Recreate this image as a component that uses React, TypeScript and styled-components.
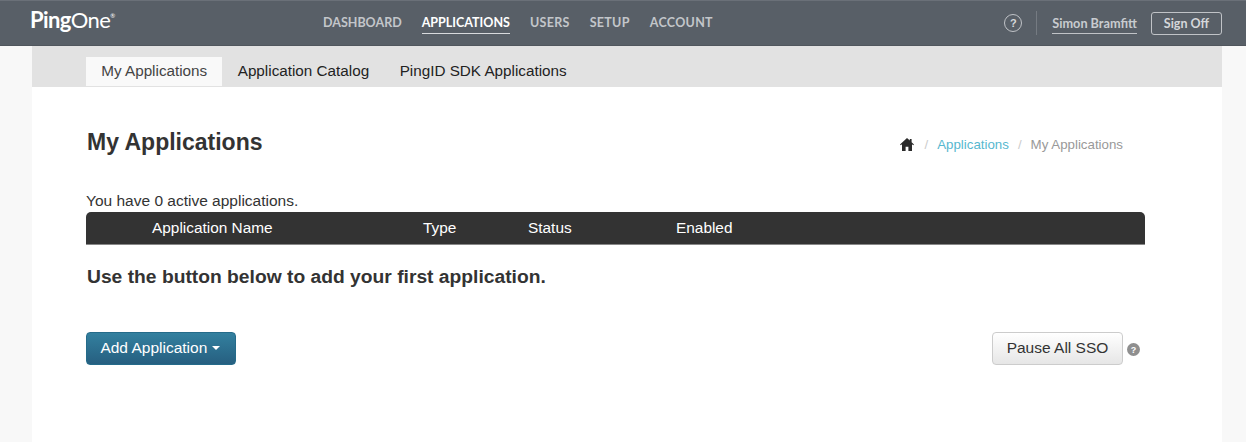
import { createGlobalStyle } from "styled-components";
import styled from "styled-components";

const GlobalStyle = createGlobalStyle`
  html, body {
    margin: 0;
    padding: 0;
    background: #f8f8f8;
    font-family: "Liberation Sans", Arial, sans-serif;
    color: #333;
  }
`;

const navItems = ["DASHBOARD", "APPLICATIONS", "USERS", "SETUP", "ACCOUNT"];
const tabs = ["My Applications", "Application Catalog", "PingID SDK Applications"];

export default function App() {
  return (
    <Page>
      <GlobalStyle />
      <Header>
        <Logo>
          <strong>Ping</strong>One<sup>®</sup>
        </Logo>
        <Nav>
          {navItems.map(item => (
            <NavLink key={item} $active={item === "APPLICATIONS"}>
              {item}
            </NavLink>
          ))}
        </Nav>
        <HeaderRight>
          <HelpCircle>?</HelpCircle>
          <Divider />
          <UserName>Simon Bramfitt</UserName>
          <SignOff>Sign Off</SignOff>
        </HeaderRight>
      </Header>
      <Main>
        <TabBar>
          {tabs.map((tab, i) => (
            <Tab key={tab} $active={i === 0}>
              {tab}
            </Tab>
          ))}
        </TabBar>
        <Content>
          <TitleRow>
            <Title>My Applications</Title>
            <Breadcrumb>
              <HomeIcon width="14" height="13" viewBox="0 0 14 13" aria-hidden="true">
                <path
                  fill="#2b2b2b"
                  d="M7 0 0 6.4l.8.9L2 6.2V13h3.6V8.8h2.8V13H12V6.2l1.2 1.1.8-.9L11.6 4.2V1h-1.8v1.5z"
                />
              </HomeIcon>
              <Slash>/</Slash>
              <CrumbLink>Applications</CrumbLink>
              <Slash>/</Slash>
              <CrumbCurrent>My Applications</CrumbCurrent>
            </Breadcrumb>
          </TitleRow>
          <Count>You have 0 active applications.</Count>
          <TableHead>
            <NameCol>Application Name</NameCol>
            <TypeCol>Type</TypeCol>
            <StatusCol>Status</StatusCol>
            <span>Enabled</span>
          </TableHead>
          <Hint>Use the button below to add your first application.</Hint>
          <Actions>
            <AddButton>
              Add Application <Caret />
            </AddButton>
            <PauseGroup>
              <PauseButton>Pause All SSO</PauseButton>
              <SmallHelp>?</SmallHelp>
            </PauseGroup>
          </Actions>
        </Content>
      </Main>
    </Page>
  );
}

const Page = styled.div`
  width: 1246px;
  height: 442px;
  overflow: hidden;
`;

const Header = styled.header`
  height: 46px;
  box-sizing: border-box;
  display: flex;
  align-items: center;
  background: #585f67;
  border-top: 1px solid #6a7078;
  border-bottom: 1px solid #50565d;
  padding: 0 24px 0 30px;
  color: #fff;
`;

const Logo = styled.div`
  width: 293px;
  flex: none;
  font-family: Lato, sans-serif;
  font-size: 22px;
  line-height: 24px;
  letter-spacing: -0.6px;
  margin-top: -6px;
  color: #fff;

  strong {
    font-weight: 700;
  }

  sup {
    font-size: 6px;
    vertical-align: 10px;
    line-height: 0;
  }
`;

const Nav = styled.nav`
  display: flex;
  gap: 20px;
  height: 100%;
  align-items: center;
`;

const NavLink = styled.a<{ $active?: boolean }>`
  font-family: Lato, sans-serif;
  font-size: 12.5px;
  font-weight: 700;
  line-height: 21px;
  color: ${p => (p.$active ? "#fff" : "#c3c6ca")};
  border-bottom: 1px solid ${p => (p.$active ? "#d8dadd" : "transparent")};

  &:nth-child(n + 3) {
    letter-spacing: 0.3px;
  }
`;

const HeaderRight = styled.div`
  margin-left: auto;
  display: flex;
  align-items: center;
`;

const HelpCircle = styled.span`
  width: 18px;
  height: 18px;
  box-sizing: border-box;
  border: 1px solid #c0c3c7;
  border-radius: 50%;
  display: flex;
  align-items: center;
  justify-content: center;
  font-size: 11px;
  font-weight: 700;
  color: #d5d7da;
`;

const Divider = styled.span`
  width: 1px;
  height: 24px;
  background: #757b82;
  margin: 0 15px 0 14px;
`;

const UserName = styled.a`
  font-family: Lato, sans-serif;
  font-size: 12.7px;
  font-weight: 700;
  line-height: 20px;
  color: #c8ccd0;
  border-bottom: 1px solid #c0c3c7;
`;

const SignOff = styled.button`
  margin-left: 14px;
  width: 71px;
  height: 23px;
  padding: 0;
  background: transparent;
  border: 1px solid #c0c3c7;
  border-radius: 3px;
  font-family: Lato, sans-serif;
  font-size: 12.5px;
  font-weight: 700;
  color: #d5d7da;
`;

const Main = styled.main`
  margin: 0 24px 0 32px;
  height: 396px;
  background: #fff;
`;

const TabBar = styled.div`
  height: 41px;
  box-sizing: border-box;
  display: flex;
  align-items: flex-end;
  background: #e2e2e2;
  padding: 0 0 1px 54px;
`;

const Tab = styled.a<{ $active?: boolean }>`
  height: 29px;
  box-sizing: border-box;
  padding: 0 15.25px 2px;
  display: flex;
  align-items: center;
  font-size: 15.25px;
  color: ${p => (p.$active ? "#444" : "#222")};
  background: ${p => (p.$active ? "#f9f9f9" : "transparent")};
`;

const Content = styled.div`
  padding: 0 77px 0 54px;
`;

const TitleRow = styled.div`
  display: flex;
  justify-content: space-between;
  align-items: center;
  height: 30px;
  padding-top: 40px;
`;

const Title = styled.h1`
  margin: 0;
  padding-left: 1px;
  font-size: 23px;
  font-weight: 700;
  color: #333;
`;

const Breadcrumb = styled.div`
  display: flex;
  align-items: center;
  font-size: 13.3px;
  padding-right: 22px;
  margin-top: 5px;
`;

const HomeIcon = styled.svg`
  margin-right: 2px;
`;

const Slash = styled.span`
  color: #ccc;
  margin: 0 9px;
`;

const CrumbLink = styled.a`
  color: #57b8cf;
`;

const CrumbCurrent = styled.span`
  color: #999;
`;

const Count = styled.p`
  margin: 33px 0 0;
  padding-bottom: 1px;
  font-size: 15.5px;
  line-height: 21px;
  color: #333;
`;

const TableHead = styled.div`
  display: flex;
  align-items: center;
  height: 33px;
  box-sizing: border-box;
  background: #333;
  border-bottom: 1px solid #888;
  border-radius: 5px 5px 0 0;
  color: #fff;
  font-size: 15.4px;
  padding-left: 66px;
`;

const NameCol = styled.span`
  width: 271px;
`;

const TypeCol = styled.span`
  width: 105px;
`;

const StatusCol = styled.span`
  width: 148px;
`;

const Hint = styled.h2`
  margin: 20px 0 0;
  padding-left: 1px;
  font-size: 19.25px;
  line-height: 24px;
  font-weight: 700;
  color: #333;
`;

const Actions = styled.div`
  margin-top: 43px;
  display: flex;
  justify-content: space-between;
  align-items: center;
`;

const AddButton = styled.button`
  width: 150px;
  height: 33px;
  padding: 0 2px 2px 0;
  border: 1px solid #256b8a;
  border-radius: 4px;
  background: linear-gradient(#33809f, #265f80);
  color: #fff;
  font-family: inherit;
  font-size: 15.5px;
`;

const Caret = styled.span`
  display: inline-block;
  vertical-align: middle;
  border-top: 4px solid #fff;
  border-left: 4px solid transparent;
  border-right: 4px solid transparent;
`;

const PauseGroup = styled.div`
  display: flex;
  align-items: center;
  gap: 4px;
`;

const PauseButton = styled.button`
  width: 131px;
  height: 33px;
  padding: 0 0 2px;
  border: 1px solid #ccc;
  border-radius: 4px;
  background: linear-gradient(#fff, #e6e6e6);
  color: #333;
  font-family: inherit;
  font-size: 15.5px;
`;

const SmallHelp = styled.span`
  width: 13px;
  height: 13px;
  margin-right: 5px;
  margin-top: 2px;
  border-radius: 50%;
  background: #8f8f8f;
  color: #fff;
  display: flex;
  align-items: center;
  justify-content: center;
  font-size: 9px;
  font-weight: 700;
`;
